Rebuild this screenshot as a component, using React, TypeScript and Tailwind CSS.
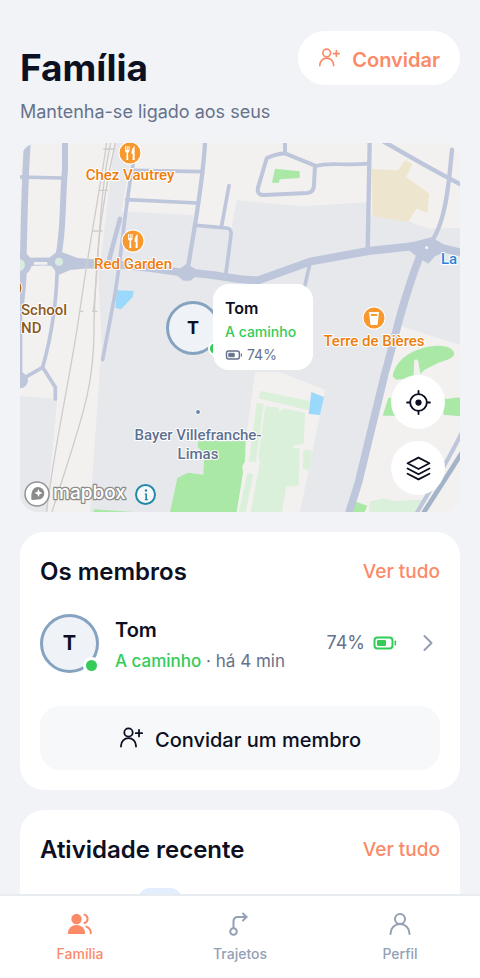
import type { ReactNode } from "react";

type IconProps = { className?: string };

function UserPlusIcon({ className }: IconProps) {
  return (
    <svg viewBox="0 0 24 24" className={className} fill="none" stroke="currentColor" strokeWidth="1.8" strokeLinecap="round" aria-hidden="true">
      <circle cx="9.5" cy="6.5" r="4.2" />
      <path d="M2 20.500v-.8a7.500 7.500 0 0 1 15 0v.8" />
      <path d="M20 4v6.400M16.800 7.200H23.200" />
    </svg>
  );
}

function BatteryIcon({ className }: IconProps) {
  return (
    <svg viewBox="0 0 24 14" className={className} fill="none" stroke="currentColor" strokeWidth="2" aria-hidden="true">
      <rect x="1.5" y="1.5" width="18" height="11" rx="3" />
      <rect x="4.5" y="4.5" width="8" height="5" rx="0.5" fill="currentColor" stroke="currentColor" strokeWidth="1" />
      <path d="M22.3 5.2v3.6" strokeLinecap="round" strokeWidth="1.6" />
    </svg>
  );
}

function ChevronIcon({ className }: IconProps) {
  return (
    <svg viewBox="0 0 12 18" className={className} fill="none" stroke="currentColor" strokeWidth="2" strokeLinecap="round" strokeLinejoin="round" aria-hidden="true">
      <path d="M2.5 2 9.5 9l-7 7" />
    </svg>
  );
}

function LocateIcon({ className }: IconProps) {
  return (
    <svg viewBox="0 0 24 24" className={className} fill="none" stroke="currentColor" strokeWidth="1.8" strokeLinecap="round" aria-hidden="true">
      <circle cx="12" cy="12" r="8" />
      <circle cx="12" cy="12" r="3" fill="currentColor" stroke="none" />
      <path d="M12 1v3M12 20v3M1 12h3M20 12h3" />
    </svg>
  );
}

function LayersIcon({ className }: IconProps) {
  return (
    <svg viewBox="0 0 24 24" className={className} fill="none" stroke="currentColor" strokeWidth="1.8" strokeLinecap="round" strokeLinejoin="round" aria-hidden="true">
      <path d="M12 1.500 22.500 7 12 12.500 1.500 7z" />
      <path d="M1.500 12 12 17.500 22.500 12" />
      <path d="M1.500 17 12 22.500 22.500 17" />
    </svg>
  );
}

function FamilyIcon({ className }: IconProps) {
  return (
    <svg viewBox="0 0 26 24" className={className} fill="none" stroke="currentColor" strokeWidth="2" strokeLinecap="round" aria-hidden="true">
      <circle cx="9.5" cy="7" r="5.2" fill="currentColor" stroke="none" />
      <path d="M1 22v-1.2a8.5 7.800 0 0 1 17 0V22z" fill="currentColor" stroke="none" />
      <path d="M17.5 2.6a4.4 4.4 0 0 1 0 8.4" />
      <path d="M19.3 14.6c2.8 1.2 4.5 3.6 4.5 6.6" />
    </svg>
  );
}

function RouteIcon({ className }: IconProps) {
  return (
    <svg viewBox="0 0 24 24" className={className} fill="none" stroke="currentColor" strokeWidth="2" strokeLinecap="round" strokeLinejoin="round" aria-hidden="true">
      <circle cx="5.500" cy="19.500" r="3.300" />
      <path d="M5.500 16V9a4 4 0 0 1 4-4h9" />
      <path d="M15 1.500 18.500 5 15 8.500" />
    </svg>
  );
}

function ProfileIcon({ className }: IconProps) {
  return (
    <svg viewBox="0 0 24 24" className={className} fill="none" stroke="currentColor" strokeWidth="2" strokeLinecap="round" aria-hidden="true">
      <circle cx="12" cy="7" r="5" />
      <path d="M2.500 22v-.5a9.500 9.500 0 0 1 19 0v.5" />
    </svg>
  );
}

function RestaurantPin({ x, y }: { x: number; y: number }) {
  return (
    <g transform={`translate(${x} ${y})`}>
      <circle r="11.500" fill="#fff" />
      <circle r="10.500" fill="#f8992f" />
      <path d="M-5-7v4.500q0 2 1.700 2.300L-3.700 7h2L-2-.2Q-.5-.8-.5-2.500V-7h-1v4h-.8v-4h-1v4h-.8v-4z" fill="#fff" />
      <path d="M4.600-7Q1.300-4.500 1.500 1h1.300L2.500 7h2.200z" fill="#fff" />
    </g>
  );
}

// Ground, parks, water and roads, drawn on a 1320x1107 grid.
function MapTerrain() {
  return (
    <g transform="scale(0.333333)">
      <rect width="1320" height="1107" fill="#f3f0f0" />
      <path
        d="M285 0h56l-36 205 215 12v35l115 2 15-82 200 18 195-12 10 42 75 2 95 35 95-3v352l-180-58-140 560H875l40-368-135-52h-75l-40 420H210l35-507-10-200z"
        fill="#e6e8ec"
      />
      <path d="M705 690h75l135 52-75 365H640l35-200z" fill="#f3f0f0" />
      <path d="M840 1107l75-365h180l-95 365z" fill="#e6e8ec" />
      <path d="M0 760l112 8-32 339H0z" fill="#e6e8ec" />

      <path d="M1055 78l80 4 20-32 22 14-19 38 70 50-6 58-33-13-24 40-108-18z" fill="#eee5cf" />

      <g fill="#aae8a6">
        <path d="M765 77l74 8v20l-60 4-2 10h-21z" />
        <path d="M535 895h142l-2 60-8 15 2 20-19 117H450l22-102 32-16 46 6 3-62-20-22z" />
        <path d="M222 1099l120 8H220z" />
        <path d="M1118 700c8-50 60-87 132-92 35-1 56 12 52 28-9 16-40 18-52 26-20 12-30 10-52 33l-20 10-50 5z" />
        <path d="M1105 765l20-2v55h-37zM1270 765c18 8 32-5 50 0v55l-50-5zM1008 1076l34 12-8 19h-35z" />
      </g>
      <path d="M1182 655q6-12 13 0l8 50h-22z" fill="#f3f0f0" />

      <g fill="#daf0da">
        <path d="M721 744l149 30-3 28-152-36z" />
        <path d="M736 790l42 4-2 16 15-14 64 14-4 92-33 6 5 7 16 1-3 112-38 3-13 86H690l30-160-5-15z" />
        <path d="M710 779l21 4-24 175-20-3zM682 990l18 4-22 113h-22zM850 922h26l-8 62-20-8z" />
        <path d="M1048 1076l42-10 30 8 88-4-20 37h-140z" />
      </g>

      <path d="M874 747l38 15-12 54-34-3zM291 442l50 2-3 18-34 36-18-3z" fill="#9ad8fc" />

      <g fill="none" stroke="#bec6db" strokeLinecap="round" strokeLinejoin="round">
        <path d="M-10 362C40 350 150 358 220 365 350 360 430 385 505 390 590 392 640 412 715 412L870 356 1045 324 1220 305 1330 330" strokeWidth="24" />
        <path d="M22 0C14 120 12 230 10 350 12 400 4 470 0 500" strokeWidth="20" />
        <path d="M135 0v80C126 170 132 280 112 350" strokeWidth="18" />
        <path d="M0 102l125 3M112 350C112 470 94 580 68 673L10 706M68 673l38 60v35" strokeWidth="11" />
        <path d="M340 60C315 180 300 390 278 490L248 650" strokeWidth="11" />
        <path d="M300 228Q275 320 265 360" strokeWidth="14" />
        <path d="M555 0C548 130 522 260 502 385" strokeWidth="13" />
        <path d="M335 82l212 4M320 170l212 10M627 128l-22 120M528 247l92 8q15 2 13 20l-15 115" strokeWidth="11" />
        <path d="M795-5v36q-35 4-55 15l-26 88q-5 22 18 22l130-6q20-3 20-25l3-57-90-37" strokeWidth="12" />
        <path d="M885 70c50-15 80 0 160-8M870 360l-18 80" strokeWidth="11" />
        <path d="M1049 0l-6 320" strokeWidth="13" />
        <path d="M1090-5C1160 36 1260 92 1325 126M1296 20c-10 110-20 225-68 285" strokeWidth="13" />
        <path d="M1205 325C1140 490 1125 590 1095 690L1015 1020 985 1115" strokeWidth="23" />
        <path d="M0 500v220" strokeWidth="14" />
        <path d="M1325 870q-45 90-135 240" strokeWidth="12" />
      </g>
      <path d="M1325 930q-50 80-115 180" fill="none" stroke="#a3b3c8" strokeWidth="14" />
      <g fill="#bec6db">
        <path d="M80 350l35-27 58 22 50 4v25l-72 7-36 15zM462 390l38-28 42 25-30 26h-22zM1145 305l90-22 60 35-50 22-20 22-30-18z" />
        <circle cx="0" cy="362" r="35" />
        <circle cx="0" cy="712" r="24" />
      </g>
      <g fill="#d8ebdf">
        <circle cx="117" cy="356" r="12" />
        <circle cx="-3" cy="366" r="18" />
      </g>
      <path d="M42 361h40" stroke="#f3f0f0" strokeWidth="8" />
      <circle cx="1220" cy="314" r="4" fill="#fff" />

      <g fill="none" stroke="#cfcccb" strokeWidth="4">
        <path d="M260 0C240 140 210 290 180 500S100 920 80 1107" />
        <path d="M286 0C230 250 228 390 222 540 225 740 180 840 96 1107" />
        <path d="M272 0C235 170 240 330 220 505" />
        <path d="M250 18h34M236 142h28M216 264h32M176 505h14M216 505h16" />
      </g>
    </g>
  );
}

function StreetMap() {
  return (
    <svg viewBox="0 0 440 369" preserveAspectRatio="xMidYMid slice" className="block h-full w-full" role="img" aria-label="Mapa">
      <MapTerrain />

      <RestaurantPin x={110} y={10} />
      <RestaurantPin x={113} y={98} />
      <g transform="translate(354 175)">
        <circle r="11.500" fill="#fff" />
        <circle r="10.500" fill="#f8992f" />
        <path d="M-5-6H5L3.500 7h-7z" fill="#fff" />
        <path d="M-3.200-4h6.400l-.3 2h-5.800z" fill="#f8992f" />
      </g>
      <circle cx="-8" cy="145" r="10" fill="#a86a2c" stroke="#fff" />
      <circle cx="178" cy="269" r="2.500" fill="#6889a8" stroke="#fff" />

      <g
        className="font-['Roboto',sans-serif] text-[15px] font-medium"
        stroke="#fff"
        strokeWidth="2"
        strokeLinejoin="round"
        paintOrder="stroke"
      >
        <g fill="#ee7d0b" textAnchor="middle">
          <text x="110" y="37">Chez Vautrey</text>
          <text x="113" y="126">Red Garden</text>
          <text x="354" y="203">Terre de Bières</text>
        </g>
        <g fill="#8c5a24">
          <text x="1" y="172">School</text>
          <text x="1" y="190">ND</text>
        </g>
        <text x="421" y="121" fill="#2f83d6">La</text>
        <g fill="#5f7191" textAnchor="middle">
          <text x="178" y="297">Bayer Villefranche-</text>
          <text x="178" y="316">Limas</text>
        </g>
      </g>

      <circle cx="17" cy="351" r="12" fill="#fff" stroke="#929292" strokeWidth="1.500" />
      <path d="M11.500 357c-1-9 2-13 6.500-13a6.300 6.300 0 1 1 0 12.600z" fill="#8b8b8b" />
      <path d="M18.500 346l1.200 2.800 2.800 1.200-2.800 1.200-1.200 2.800-1.200-2.800-2.800-1.200 2.800-1.200z" fill="#fff" />
      <text
        x="33"
        y="356"
        className="font-['Inter',sans-serif] text-[19px] font-medium"
        fill="#fff"
        stroke="#8b8b8b"
        strokeWidth="2.500"
        strokeLinejoin="round"
        paintOrder="stroke"
      >
        mapbox
      </text>
    </svg>
  );
}

function Card({ title, children }: { title: string; children: ReactNode }) {
  return (
    <section className="rounded-[24px] bg-white p-5">
      <div className="flex items-center justify-between pt-1">
        <h2 className="text-2xl leading-8 font-semibold">{title}</h2>
        <a href="#" className="text-[19px] leading-8 font-medium text-[#fb8a68]">
          Ver tudo
        </a>
      </div>
      {children}
    </section>
  );
}

const TABS = [
  { label: "Família", Icon: FamilyIcon, active: true },
  { label: "Trajetos", Icon: RouteIcon, active: false },
  { label: "Perfil", Icon: ProfileIcon, active: false },
];

export default function App() {
  return (
    <div className="flex h-screen flex-col bg-[#f1f3f7] font-['Inter','Liberation_Sans',sans-serif] text-[#0c1022]">
      <main className="min-h-0 flex-1 overflow-y-auto px-5 pt-[31px] pb-5 [scrollbar-width:none]">
        <header className="flex items-start justify-between">
          <div className="pt-3">
            <h1 className="text-[37px] leading-[50px] font-bold">Família</h1>
            <p className="mt-1 text-lg leading-[30px] whitespace-nowrap text-[#66728b]">Mantenha-se ligado aos seus</p>
          </div>
          <button type="button" className="flex h-[54px] items-center gap-3 rounded-full bg-white px-5 text-xl font-semibold text-[#fb8a68]">
            <UserPlusIcon className="size-[22px]" />
            <span className="pt-1">Convidar</span>
          </button>
        </header>

        <div className="relative mt-4 aspect-[440/369] overflow-hidden rounded-[18px]">
          <StreetMap />

          <button type="button" aria-label="Informações do mapa" className="absolute bottom-[7px] left-[115px] flex size-[21px] items-center justify-center rounded-full border-2 border-[#2389aa] bg-white/70 text-[#2389aa]">
            <svg viewBox="0 0 12 12" className="size-3" fill="currentColor" aria-hidden="true">
              <circle cx="6" cy="1.500" r="1.200" />
              <path d="M4.800 4.500H7v5.500h.8v1.300H4.800V10h.6V5.800h-.6z" />
            </svg>
          </button>

          <div className="absolute top-[158px] left-[146px] flex size-[54px] items-center justify-center rounded-full border-[3px] border-[#85a3c1] bg-[#eff3f7] text-lg font-bold">
            T
            <span className="absolute -right-1 -bottom-0.5 size-[11px] rounded-full bg-[#34cb58] ring-2 ring-white" />
          </div>
          <div className="absolute top-[141px] left-[193px] w-[100px] rounded-[16px] bg-white px-3 pt-3 pb-1 whitespace-nowrap">
            <p className="text-base leading-6 font-semibold">Tom</p>
            <p className="text-sm leading-6 font-medium text-[#34cb58]">A caminho</p>
            <p className="flex items-center gap-1 text-sm leading-[22px] text-[#66728b]">
              <BatteryIcon className="h-[10px] w-[18px]" />
              74%
            </p>
          </div>

          <div className="absolute right-[15px] bottom-[17px] flex flex-col gap-3">
            <button type="button" aria-label="Localizar" className="flex size-[54px] items-center justify-center rounded-full bg-white">
              <LocateIcon className="size-[25px]" />
            </button>
            <button type="button" aria-label="Camadas" className="flex size-[54px] items-center justify-center rounded-full bg-white">
              <LayersIcon className="size-[25px]" />
            </button>
          </div>
        </div>

        <div className="mt-5 flex flex-col gap-5">
          <Card title="Os membros">
            <a href="#" className="mt-[22px] flex items-center">
              <span className="relative flex size-[59px] shrink-0 items-center justify-center rounded-full border-[3px] border-[#85a3c1] bg-[#eff3f7] text-xl font-bold">
                T
                <span className="absolute -right-px -bottom-px size-[11px] rounded-full bg-[#34cb58] ring-3 ring-white" />
              </span>
              <span className="ml-4 flex-1 pt-1">
                <span className="block text-xl leading-8 font-semibold">Tom</span>
                <span className="block text-[17px] leading-[30px] whitespace-nowrap text-[#66728b]">
                  <span className="font-medium text-[#34cb58]">A caminho</span> · há 4 min
                </span>
              </span>
              <span className="text-lg text-[#66728b]">74%</span>
              <BatteryIcon className="ml-2 h-[14px] w-6 text-[#34cb58]" />
              <ChevronIcon className="mx-[6px] ml-[25px] h-[18px] w-3 text-[#929db5]" />
            </a>
            <button type="button" className="mt-[30px] flex h-16 w-full items-center justify-center gap-3 rounded-[20px] bg-[#f6f8fa] text-xl font-medium">
              <UserPlusIcon className="size-6" />
              <span className="pt-1">Convidar um membro</span>
            </button>
          </Card>

          <Card title="Atividade recente">
            <div className="mt-[22px] flex px-[98px]">
              <span className="h-6 w-11 rounded-xl bg-[#e2edfd]" />
            </div>
          </Card>
        </div>
      </main>

      <nav className="grid h-[84px] shrink-0 grid-cols-3 border-t-2 border-[#e8ebf0] bg-white">
        {TABS.map(({ label, Icon, active }) => (
          <a
            key={label}
            href="#"
            aria-current={active ? "page" : undefined}
            className={`flex flex-col items-center gap-2 pt-4 text-sm leading-5 font-medium ${active ? "text-[#fb8a68]" : "text-[#94a0b5]"}`}
          >
            <Icon className="h-6 w-[26px]" />
            {label}
          </a>
        ))}
      </nav>
    </div>
  );
}
